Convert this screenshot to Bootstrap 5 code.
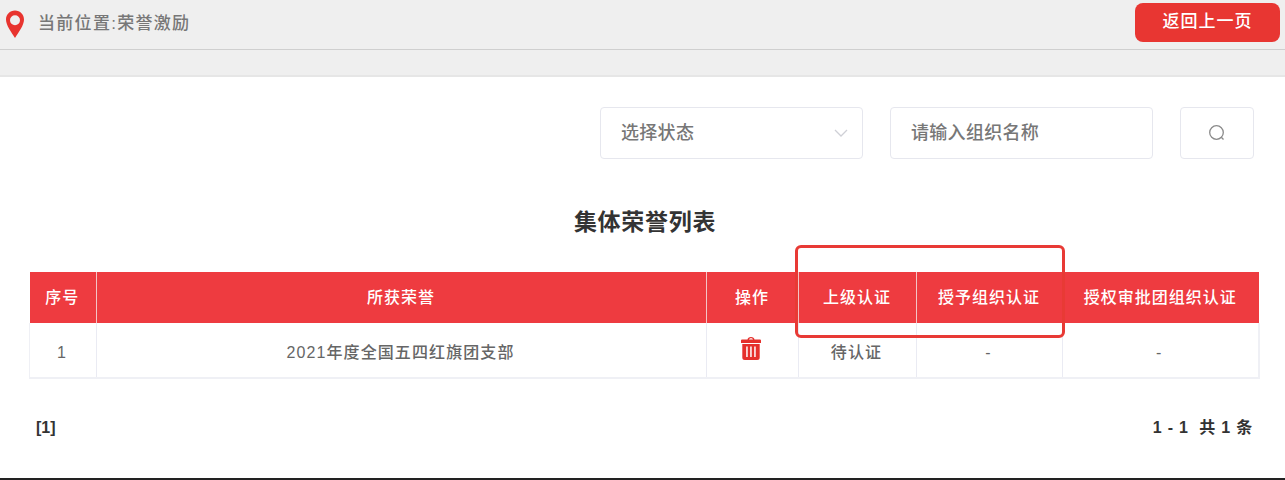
<!DOCTYPE html>
<html lang="zh">
<head>
<meta charset="utf-8">
<title>荣誉激励</title>
<link href="https://cdn.jsdelivr.net/npm/bootstrap@5.3.0/dist/css/bootstrap.min.css" rel="stylesheet">
<style>
html,body{height:480px;overflow:hidden}
body{font-family:"Liberation Sans","Noto Sans CJK SC",sans-serif;background:#fff;color:#555;position:relative;border-bottom:2px solid #222}
.crumb-bar{height:50px;background:#efefef;border-bottom:1px solid #cfcfcf;padding:0 5px 0 5px}
.crumb-text{font-size:17px;font-weight:500;color:#777;margin-left:13px;letter-spacing:1.3px;margin-top:-1px}
.back-btn{width:145px;height:39px;margin-top:-5px;background:#e83632;color:#fff;border:0;border-radius:8px;font-size:17px;font-weight:500;letter-spacing:1px;padding:0}
.back-btn:hover{background:#e83632;color:#fff}
.gap-strip{height:27px;background:#efefef;border-bottom:2px solid #e6e6e6}
.filter-row{padding:30px 31px 0 0;height:82px}
.filter-box{height:52px;border:1px solid #e6e7ee;border-radius:4px;font-size:18px;font-weight:500;color:#777;padding:0 20px;letter-spacing:.3px}
.f-select{width:263px;padding-right:13px}
.f-input{width:263px;margin-left:27px}
.f-search{width:74px;margin-left:27px;padding:0 1px 0 0}
.list-title{font-size:23px;font-weight:700;color:#333;text-align:center;margin:48px 0 0 0;padding-left:5px;line-height:30px;height:30px;letter-spacing:.7px}
.table-wrap{margin:35px 26px 0 29px;position:relative}
.honor-table{table-layout:fixed;width:1229px;margin:0;border-collapse:collapse;font-size:16px}
.honor-table th{background:#ee3b40;color:#fff;font-weight:500;height:51px;border:0;border-right:1px solid #f3c4c6;text-align:center;vertical-align:middle;padding:0 1px 0 0;box-shadow:none;letter-spacing:1px}
.honor-table th:last-child{border-right:0}
.honor-table td{height:55px;border:0;border-right:1px solid #eaebf3;border-bottom:2px solid #eff0f5;text-align:center;vertical-align:middle;padding:6px 2px 0 0;color:#666;font-weight:500;box-shadow:none;letter-spacing:1.1px}
.honor-table td:first-child{border-left:1px solid #eff0f5}
.honor-table td:last-child{border-right:2px solid #eff0f5}
.honor-table td.trash-cell{padding:0 3px 4px 0}
.mark-frame{position:absolute;left:766px;top:-27px;width:270px;height:93px;border:3px solid #e83a35;border-radius:6px;pointer-events:none}
.pager-row{margin:39px 32px 0 36px;font-size:16px;font-weight:700;color:#333;line-height:20px}
.pager-total{letter-spacing:.8px}
</style>
</head>
<body>
<div class="crumb-bar d-flex align-items-center justify-content-between">
  <div class="d-flex align-items-center">
    <svg width="20" height="29" viewBox="0 0 20 29" aria-hidden="true"><path fill-rule="evenodd" fill="#e8342f" d="M10 .5C4.800.5 1 4.600 1 9.700c0 5.500 5.300 12.300 9 18.300 3.700-6 9-12.800 9-18.300C19 4.600 15.200.5 10 .5zm0 4.700a5 5 0 1 1 0 10 5 5 0 0 1 0-10z"/></svg>
    <span class="crumb-text">当前位置:荣誉激励</span>
  </div>
  <button type="button" class="btn back-btn">返回上一页</button>
</div>
<div class="gap-strip"></div>
<div class="filter-row d-flex justify-content-end">
  <div class="filter-box f-select d-flex align-items-center justify-content-between">
    <span>选择状态</span>
    <svg width="16" height="10" viewBox="0 0 16 10" aria-hidden="true"><path d="M2 2l6 6 6-6" fill="none" stroke="#cfd0d6" stroke-width="1.300"/></svg>
  </div>
  <div class="filter-box f-input d-flex align-items-center">请输入组织名称</div>
  <div class="filter-box f-search d-flex align-items-center justify-content-center">
    <svg width="18" height="18" viewBox="0 0 18 18" aria-hidden="true"><circle cx="8.500" cy="8.500" r="6.800" fill="none" stroke="#8a8a8a" stroke-width="1.300"/><path d="M13.300 13.300l2.200 2.200" stroke="#8a8a8a" stroke-width="1.300"/></svg>
  </div>
</div>
<h1 class="list-title">集体荣誉列表</h1>
<div class="table-wrap">
  <table class="table honor-table">
    <colgroup><col style="width:67px"><col style="width:610px"><col style="width:92px"><col style="width:118px"><col style="width:146px"><col style="width:196px"></colgroup>
    <thead>
      <tr><th>序号</th><th>所获荣誉</th><th>操作</th><th>上级认证</th><th>授予组织认证</th><th>授权审批团组织认证</th></tr>
    </thead>
    <tbody>
      <tr>
        <td>1</td>
        <td>2021年度全国五四红旗团支部</td>
        <td class="trash-cell">
          <svg width="20" height="23" viewBox="0 0 20 23" aria-hidden="true"><path fill="#e5302c" fill-rule="evenodd" d="M6.500 2.600C6.800 1 7.800 0 10 0s3.200 1 3.500 2.600H19a1 1 0 0 1 1 1V6H0V3.600a1 1 0 0 1 1-1zM8 2.600h4C11.700 1.700 11 1.300 10 1.300S8.300 1.700 8 2.600zM1.300 7h17.400v13.500a2.500 2.500 0 0 1-2.500 2.500H3.800a2.500 2.500 0 0 1-2.500-2.500zM5.200 9.500v10.500h1.500V9.500zm4 0v10.500h1.500V9.500zm4 0v10.500h1.500V9.500z"/></svg>
        </td>
        <td>待认证</td>
        <td>-</td>
        <td>-</td>
      </tr>
    </tbody>
  </table>
  <div class="mark-frame"></div>
</div>
<div class="pager-row d-flex justify-content-between">
  <span>[1]</span>
  <span class="pager-total">1 - 1&nbsp; 共 1 条</span>
</div>
<script src="https://cdn.jsdelivr.net/npm/bootstrap@5.3.0/dist/js/bootstrap.bundle.min.js"></script>
</body>
</html>
